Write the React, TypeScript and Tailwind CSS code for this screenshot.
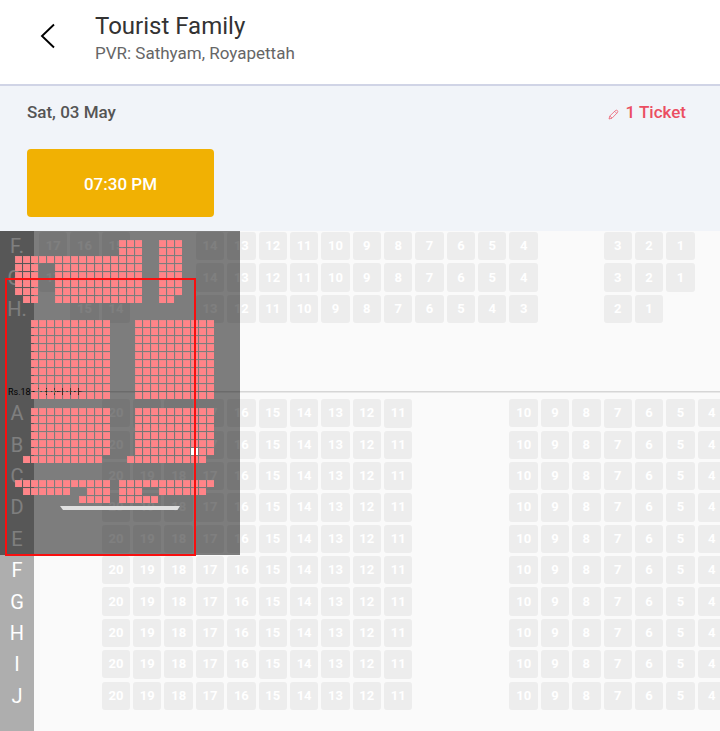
import type { ReactNode } from "react";

type Seat = number | null;

type SeatRow = {
    name: string;
    seats: Seat[];
}

// counts down from -> to, e.g. range(4, 1) = 4,3,2,1
const range = (from: number, to: number): Seat[] =>
    Array.from({ length: from - to + 1 }, (_, i) => from - i);

const gap = (n: number): Seat[] => Array(n).fill(null);

const upperRows: SeatRow[] = [
    { name: "F.", seats: [...range(17, 15), ...gap(2), ...range(14, 4), ...gap(2), ...range(3, 1)] },
    { name: "G.", seats: [...range(17, 15), ...gap(2), ...range(14, 4), ...gap(2), ...range(3, 1)] },
    { name: "H.", seats: [...gap(1), ...range(15, 14), ...gap(2), ...range(13, 3), ...gap(2), ...range(2, 1)] },
];

const lowerRows: SeatRow[] = ["A", "B", "C", "D", "E", "F", "G", "H", "I", "J"].map((name) => ({
    name,
    seats: [...gap(2), ...range(20, 11), ...gap(3), ...range(10, 4)],
}));

// x = sold, o = open, . = no seat
const miniMap = [
    ".............xxx..xxx....",
    ".............xxx..xxx....",
    "xxxxxxxxxxxxxxxx..xxx....",
    "xxx..xxxxxxxxxxx..xxx....",
    "xxx..xxxxxxxxxxx..xxx....",
    "xxx..xxxxxxxxxxx..xxx....",
    "xxx..xxxxxxxxxxx..xxx....",
    ".xx..xxxxxxxxxxx..xx.....",
    ".........................",
    ".........................",
    ...Array(10).fill("..xxxxxxxxxx...xxxxxxxxxx"),
    ".........................",
    ...Array(5).fill("..xxxxxxxxxx...xxxxxxxxxx"),
    "..xxxxxxxxxx...xxxxxxxoxx",
    ".xxxxxxxxxx...xxxxxxxxxx.",
    ".........................",
    ".........................",
    "xxxxxxxxxxxx.xxxxxxxxxxxx",
    ".xxxxxx..xxx.xxx..xxxxxx.",
    "........xxxx.xxxxx.......",
];

const Row = ({ name, children }: { name?: string; children?: ReactNode }) => (
    <div className="flex">
        <div className="w-[34px] shrink-0 bg-[#aeaeae] flex items-center justify-center pb-[3px] text-xl leading-7 text-white">
            {name}
        </div>
        <div className="flex-1 min-w-0">{children}</div>
    </div>
);

const Seats = ({ seats }: { seats: Seat[] }) => (
    <div className="grid grid-cols-22 gap-[3px] pl-[5px] pb-[3px] -mr-[6px]">
        {seats.map((seat, i) =>
            seat === null ? (
                <span key={i} />
            ) : (
                <button key={i} type="button" className="aspect-square rounded-[3px] bg-[#ededed] text-white text-[13px] leading-4 font-bold">
                    {seat}
                </button>
            )
        )}
    </div>
);

const MiniMap = () => (
    <div className="absolute left-0 top-0 w-[240px] h-[324px] bg-black/50">
        <div className="grid grid-cols-[repeat(25,7px)] gap-px pl-[15px] pt-[9px]">
            {miniMap.join("").split("").map((c, i) => (
                <span
                    key={i}
                    className={
                        c === "x"
                            ? "h-[7px] bg-[#ff8488] border-t border-l border-[#ee8689]"
                            : c === "o"
                                ? "h-[7px] bg-white"
                                : "h-[7px]"
                    }
                />
            ))}
        </div>
        <svg className="mt-[3px] mx-auto block" width="120" height="4" viewBox="0 0 120 4">
            <path d="M0 0H120L117.500 4H3z" fill="#e0e0e0" />
        </svg>
        {/* visible part of the hall */}
        <div className="absolute left-[5px] top-[47px] w-[191px] h-[278px] border-2 border-[#f80f0f]" />
    </div>
);

const App = () => {
    return (
        <div className="min-h-screen flex flex-col bg-[#fafafa] font-['Roboto',sans-serif]">
            <header className="flex items-center h-[86px] bg-white border-b-2 border-[#d0d4e6] pb-2 pl-10">
                <button type="button" aria-label="Back" className="w-[55px] pb-1">
                    <svg width="16" height="26" viewBox="0 0 16 26" fill="none" stroke="#000" strokeWidth="1.900">
                        <path d="M14 1.500L2 13L14 24.500" />
                    </svg>
                </button>
                <div>
                    <h1 className="text-2xl leading-[30px] text-[#333]">Tourist Family</h1>
                    <p className="text-[17px] leading-6 text-[#666]">PVR: Sathyam, Royapettah</p>
                </div>
            </header>

            <section className="bg-[#f1f4f9] pt-[14px] pb-[14px] pl-[27px] pr-[34px]">
                <div className="flex items-center justify-between text-[17px] leading-6 font-medium">
                    <p className="text-[#555]">Sat, 03 May</p>
                    <button type="button" className="flex items-center gap-1.5 text-[#eb4e62]">
                        <svg className="mt-1" width="11" height="11" viewBox="0 0 11 11" fill="none" stroke="currentColor" strokeWidth="0.700">
                            <path d="M1 10L1.800 7L7.500 1.500Q8.500 0.800 9.400 1.600Q10.200 2.500 9.500 3.500L4 9.200ZM1.800 7L4 9.200M6.700 2.300L8.700 4.300" />
                        </svg>
                        1 Ticket
                    </button>
                </div>
                <button type="button" className="mt-[25px] w-[187px] h-[68px] pt-[3px] rounded bg-[#f1b103] text-white text-[17px] font-medium">
                    07:30 PM
                </button>
            </section>

            <main className="relative flex-1 flex flex-col overflow-hidden">
                <div className="h-px w-[34px] bg-[#aeaeae]" />
                {upperRows.map((row) => (
                    <Row key={row.name} name={row.name}>
                        <Seats seats={row.seats} />
                    </Row>
                ))}
                <div className="relative">
                    <Row>
                        <div className="h-[73px] pt-[65px]">
                            <div className="h-0.5 ml-12 bg-[#e8e8e8] border-t border-[#d6d6d6]" />
                        </div>
                    </Row>
                    <p className="absolute left-2 bottom-px text-[9px] leading-3 text-black">Rs.183.73 DELUXE</p>
                </div>
                {lowerRows.map((row) => (
                    <Row key={row.name} name={row.name}>
                        <Seats seats={row.seats} />
                    </Row>
                ))}
                <div className="flex-1 min-h-5 w-[34px] bg-[#aeaeae]" />
                <MiniMap />
            </main>
        </div>
    );
};

export default App;
